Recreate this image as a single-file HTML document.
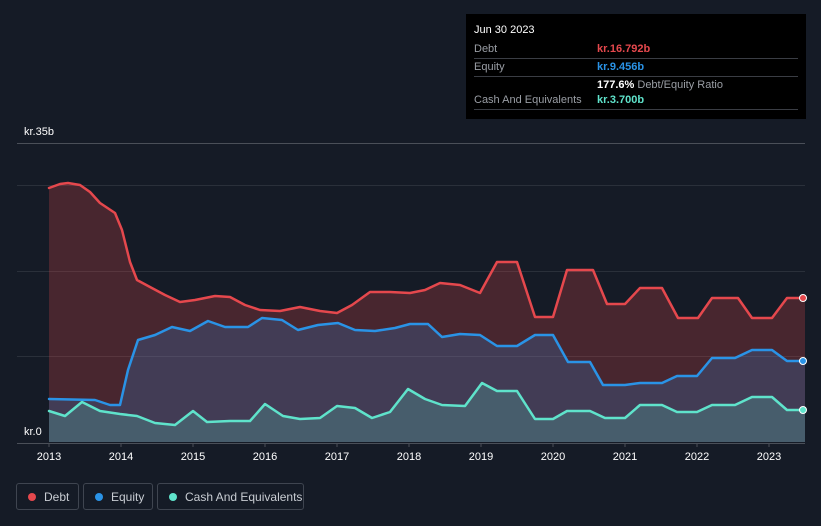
<!DOCTYPE html>
<html><head><style>
body{margin:0;background:#151b26;width:821px;height:526px;overflow:hidden;font-family:"Liberation Sans",sans-serif;position:relative}
.tt{position:absolute;left:466px;top:14px;width:340px;height:105px;background:#000;color:#fff;font-size:11px}
.tt .r{position:absolute;left:8px;right:8px;height:18px;border-bottom:1px solid #3a3d44;line-height:18px}
.tt .l{color:#9a9ea5}
.tt .v{position:absolute;left:123px;top:0;font-weight:bold}
.leg{position:absolute;top:483px;height:27px;border:1px solid #3f4550;border-radius:3px;color:#c8ccd2;font-size:12px;line-height:26px;box-sizing:border-box}
.leg i{position:absolute;left:11px;top:9px;width:8px;height:8px;border-radius:50%}
.leg span{position:absolute;left:27px}
</style></head><body>
<svg width="821" height="526" style="position:absolute;left:0;top:0">
<line x1="17" y1="143.5" x2="805" y2="143.5" stroke="#4a4f58"/>
<line x1="17" y1="185.5" x2="805" y2="185.5" stroke="#2a303a"/>
<line x1="17" y1="271.5" x2="805" y2="271.5" stroke="#2a303a"/>
<line x1="17" y1="356.5" x2="805" y2="356.5" stroke="#2a303a"/>
<g stroke-linejoin="round" stroke-linecap="round">
<polygon fill="#e5484d" fill-opacity="0.25" points="49,442 49,188 60,184 68,183 80,185 90,192 100,203 115,213 122,230 130,262 137,280 150,287 165,295 180,302 195,300 215,296 230,297 245,305 260,310 280,311 300,307 320,311 337,313 352,305 370,292 390,292 410,293 425,290 440,283 460,285 480,293 497,262 517,262 535,317 553,317 567,270 593,270 607,304 625,304 640,288 662,288 678,318 698,318 712,298 738,298 752,318 772,318 787,298 805,298 805,442"/>
<polygon fill="#2f8fe0" fill-opacity="0.22" points="49,442 49,399 95,400 110,405 120,405 128,370 138,340 155,335 172,327 190,331 208,321 225,327 248,327 262,318 282,320 298,330 318,325 338,323 355,330 375,331 395,328 410,324 428,324 442,337 460,334 480,335 497,346 517,346 535,335 553,335 568,362 590,362 603,385 625,385 640,383 662,383 677,376 697,376 712,358 735,358 752,350 772,350 787,361 805,361 805,442"/>
<polygon fill="#5fe0c8" fill-opacity="0.2" points="49,442 49,411 65,416 82,402 100,411 120,414 137,416 155,423 175,425 193,411 207,422 230,421 250,421 265,404 283,416 300,419 320,418 337,406 355,408 372,418 390,412 408,389 425,399 442,405 465,406 482,383 497,391 517,391 535,419 553,419 567,411 590,411 605,418 625,418 640,405 662,405 677,412 697,412 712,405 735,405 752,397 772,397 787,410 805,410 805,442"/>
<polyline fill="none" stroke="#e5484d" stroke-width="2.5" points="49,188 60,184 68,183 80,185 90,192 100,203 115,213 122,230 130,262 137,280 150,287 165,295 180,302 195,300 215,296 230,297 245,305 260,310 280,311 300,307 320,311 337,313 352,305 370,292 390,292 410,293 425,290 440,283 460,285 480,293 497,262 517,262 535,317 553,317 567,270 593,270 607,304 625,304 640,288 662,288 678,318 698,318 712,298 738,298 752,318 772,318 787,298 805,298"/>
<polyline fill="none" stroke="#2a93e6" stroke-width="2.5" points="49,399 95,400 110,405 120,405 128,370 138,340 155,335 172,327 190,331 208,321 225,327 248,327 262,318 282,320 298,330 318,325 338,323 355,330 375,331 395,328 410,324 428,324 442,337 460,334 480,335 497,346 517,346 535,335 553,335 568,362 590,362 603,385 625,385 640,383 662,383 677,376 697,376 712,358 735,358 752,350 772,350 787,361 805,361"/>
<polyline fill="none" stroke="#5fe3cb" stroke-width="2.5" points="49,411 65,416 82,402 100,411 120,414 137,416 155,423 175,425 193,411 207,422 230,421 250,421 265,404 283,416 300,419 320,418 337,406 355,408 372,418 390,412 408,389 425,399 442,405 465,406 482,383 497,391 517,391 535,419 553,419 567,411 590,411 605,418 625,418 640,405 662,405 677,412 697,412 712,405 735,405 752,397 772,397 787,410 805,410"/>
</g>
<circle cx="803" cy="298" r="3.5" fill="#e5484d" stroke="#fff" stroke-width="1"/>
<circle cx="803" cy="361" r="3.5" fill="#2a93e6" stroke="#fff" stroke-width="1"/>
<circle cx="803" cy="410" r="3.5" fill="#5fe3cb" stroke="#fff" stroke-width="1"/>
<line x1="17" y1="443.5" x2="805" y2="443.5" stroke="#4a4f58"/>
<g stroke="#4a4f58"><line x1="49" y1="443" x2="49" y2="447"/><line x1="121" y1="443" x2="121" y2="447"/><line x1="193" y1="443" x2="193" y2="447"/><line x1="265" y1="443" x2="265" y2="447"/><line x1="337" y1="443" x2="337" y2="447"/><line x1="409" y1="443" x2="409" y2="447"/><line x1="481" y1="443" x2="481" y2="447"/><line x1="553" y1="443" x2="553" y2="447"/><line x1="625" y1="443" x2="625" y2="447"/><line x1="697" y1="443" x2="697" y2="447"/><line x1="769" y1="443" x2="769" y2="447"/></g>
<g fill="#fff" font-size="11" font-family="Liberation Sans,sans-serif" text-anchor="middle">
<text x="49" y="460">2013</text><text x="121" y="460">2014</text><text x="193" y="460">2015</text><text x="265" y="460">2016</text><text x="337" y="460">2017</text><text x="409" y="460">2018</text><text x="481" y="460">2019</text><text x="553" y="460">2020</text><text x="625" y="460">2021</text><text x="697" y="460">2022</text><text x="769" y="460">2023</text>
<text x="24" y="435" text-anchor="start">kr.0</text><text x="24" y="135" text-anchor="start">kr.35b</text>
</g>
</svg>
<div class="tt">
<div style="position:absolute;left:8px;top:10px;font-size:11px">Jun 30 2023</div>
<div class="r" style="top:26px"><span class="l">Debt</span><span class="v" style="color:#e5484d">kr.16.792b</span></div>
<div class="r" style="top:44px"><span class="l">Equity</span><span class="v" style="color:#2a93e6">kr.9.456b</span></div>
<div class="r" style="top:62px;border:none"><span class="v"><b>177.6%</b> <span class="l" style="font-weight:normal">Debt/Equity Ratio</span></span></div>
<div class="r" style="top:77px"><span class="l">Cash And Equivalents</span><span class="v" style="color:#5fe3cb">kr.3.700b</span></div>
</div>
<div class="leg" style="left:16px;width:63px"><i style="background:#e5484d"></i><span>Debt</span></div>
<div class="leg" style="left:83px;width:70px"><i style="background:#2a93e6"></i><span>Equity</span></div>
<div class="leg" style="left:157px;width:147px"><i style="background:#5fe3cb"></i><span>Cash And Equivalents</span></div>
</body></html>
